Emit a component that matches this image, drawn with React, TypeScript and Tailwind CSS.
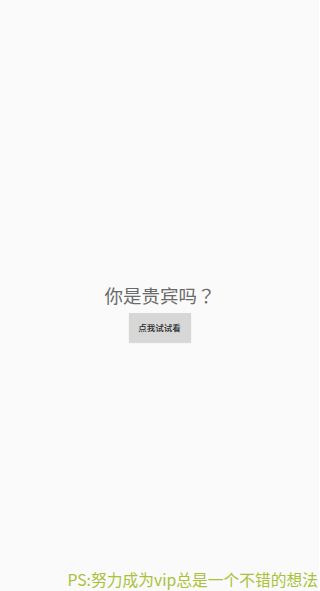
export default function App() {
  return (
    <div
      className="w-[319px] h-[591px] bg-[#fafafa] flex flex-col overflow-hidden"
      style={{ fontFamily: '"Noto Sans CJK SC", "Noto Sans", sans-serif' }}
    >
      <div className="flex flex-col items-center pt-[281px]">
        <div className="text-[18.5px] leading-[28px] text-[#6a6a6a] [text-spacing-trim:space-all] pl-[1px]">
          你是贵宾吗<span style={{ fontFamily: '"Noto Sans CJK TC", sans-serif' }}>？</span>
        </div>
        <div className="mt-[4px] w-[62px] h-[29px] bg-[#d7d7d7] flex items-center justify-center text-[8.5px] font-medium text-[#2a2a2a] shadow-[0_1px_1px_rgba(0,0,0,0.12)]">
          点我试试看
        </div>
      </div>
      <div className="flex-1" />
      <div className="flex justify-end pr-[1px]">
        <div className="text-[15.75px] leading-[22px] text-[#a9c23a] whitespace-nowrap">
          PS:努力成为vip总是一个不错的想法
        </div>
      </div>
    </div>
  );
}
